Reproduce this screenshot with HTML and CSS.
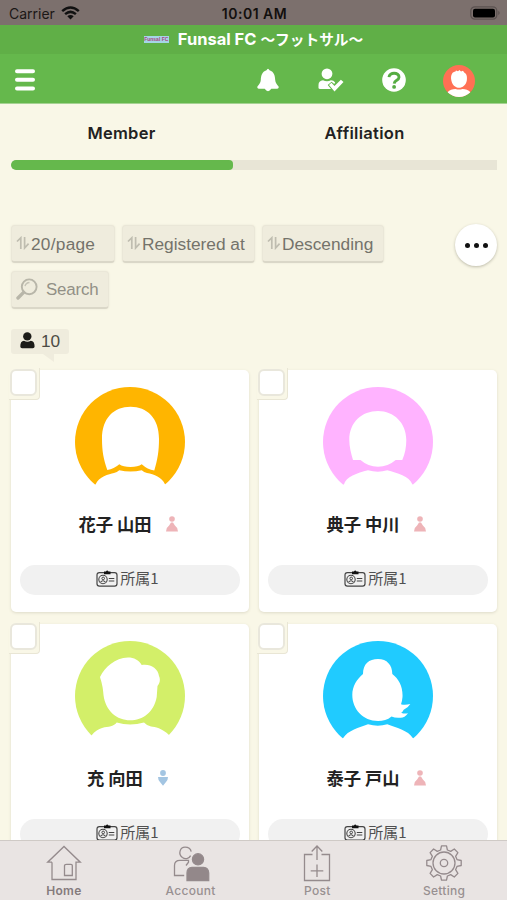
FILE: index.html
```html
<!DOCTYPE html>
<html lang="ja">
<head>
<meta charset="utf-8">
<title>Funsal FC</title>
<link rel="stylesheet" href="styles.css">
</head>
<body>
<svg class="defs" width="0" height="0" aria-hidden="true">
  <symbol id="sort" viewBox="0 0 14 14"><path d="M1 5.5 4.8 1.8V13M8.6 1V12L12.6 7.6" fill="none" stroke="currentColor" stroke-width="1.7"/></symbol>
  <symbol id="female" viewBox="0 0 12 16"><circle cx="6" cy="3" r="2.8"/><path d="M5 6.4h2L8.9 9.6Q11.8 11.6 12 15.4H0Q.2 11.6 3.1 9.6Z"/></symbol>
  <symbol id="male" viewBox="0 0 12 16"><circle cx="6" cy="3" r="2.9"/><path d="M1 7H11Q11 10 9 12L6 15.8 3 12Q1 10 1 7Z"/></symbol>
  <symbol id="card" viewBox="0 0 22 17"><rect x="1" y="2.6" width="20" height="13.6" rx="2.4" fill="none" stroke="#444" stroke-width="1.2"/><path d="M8 1.6H9.9Q11.2 -.8 12.5 1.6H14.5V4.3H8Z" fill="#111"/><circle cx="7" cy="9.5" r="4.2" fill="none" stroke="#444" stroke-width="1.1"/><circle cx="7.2" cy="8.4" r="1.3" fill="none" stroke="#444"/><path d="M4.6 12.2Q7 9.2 9.4 12.2M12.8 8.5H18.3M12.8 11H18.3" fill="none" stroke="#444" stroke-width="1.1"/></symbol>
</svg>
<div class="app">
  <header>
    <div class="status">
      <div class="carrier"><span>Carrier</span>
        <svg width="19" height="14" viewBox="0 0 19 14"><g fill="none" stroke="#111" stroke-width="2.5"><path d="M1.2 5.1Q9.5-2.1 17.8 5.1M4.1 8.1Q9.5 3.6 14.9 8.1"/></g><path d="M9.5 13.6 6.3 10.3Q9.5 7.9 12.7 10.3Z" fill="#111"/></svg>
      </div>
      <time>10:01 AM</time>
      <svg class="battery" width="31" height="14" viewBox="0 0 31 14"><rect x=".8" y=".8" width="26" height="12.4" rx="4" fill="none" stroke="#5b5250" stroke-width="1.2"/><rect x="3" y="2.8" width="22" height="8.6" rx="2" fill="#000"/><path d="M28.3 4.8Q31 7 28.3 9.2Z" fill="#5b5250"/></svg>
    </div>
    <div class="title"><span class="logo">Funsal FC</span><h1>Funsal FC <span>〜フットサル〜</span></h1></div>
    <nav>
      <svg class="burger" width="20" height="22" viewBox="0 0 20 22"><path d="M2 2.2H18M2 10.8H18M2 19.4H18" stroke="#fff" stroke-width="4" stroke-linecap="round"/></svg>
      <div class="actions">
        <svg width="22" height="24" viewBox="0 0 22 24"><path d="M9.5 2.2Q11-.9 12.5 2.2C17.2 3.6 18 8 18.2 12 18.4 15 20 16.5 21.4 18.2 22.2 19.6 21.3 20.7 20.3 20.7H14.3Q11 25.6 7.7 20.7H1.7C.7 20.7-.2 19.6.6 18.2 2 16.5 3.6 15 3.8 12 4 8 4.8 3.6 9.5 2.2Z" fill="#fff"/></svg>
        <svg width="26" height="24" viewBox="0 0 26 24"><g fill="#fff"><circle cx="9" cy="5.8" r="5.4"/><path d="M.5 20.5V17Q.5 12.7 5 12.3 9 14 13 12.3 15.5 12.3 17.2 14.6L16.2 16 13.6 13.8 9.7 17 13 21H2.3Q.5 21 .5 20Z"/><path d="m11 17 2.4-2.2 3.1 3.1 6.4-6.2 2.6 2.3-9 9.5Z"/></g></svg>
        <svg width="24" height="24" viewBox="0 0 24 24"><circle cx="12" cy="12" r="11.8" fill="#fff"/><path d="M7 9.2C7.3 3.8 17.2 4 17 9.2 16.9 12.6 12.4 11.8 12.2 15.6" fill="none" stroke="#56ac43" stroke-width="2.9"/><circle cx="12.1" cy="18.9" r="1.9" fill="#56ac43"/></svg>
        <svg width="32" height="32" viewBox="0 0 32 32"><clipPath id="ac"><circle cx="16" cy="16" r="16"/></clipPath><g clip-path="url(#ac)"><path fill="#ff7054" d="M0 0h32v32H0z"/><path fill="#fff" d="M8.1 14C7.6 9 10.3 6.5 12.2 6.8L13 5.4 15 6.3 16.5 5 18 6.4 20 5.7 21.2 7.5C24 9 24.2 12 23.8 15.5 23.2 20 19.5 22.8 16 22.8S8.8 20 8.1 14ZM4.5 27.2Q7.7 24 12.5 24 16 25 19.5 24 24.2 24 27.5 27.2L27 33H5Z"/></g></svg>
      </div>
    </nav>
  </header>
  <main>
    <div class="tabs"><span class="m">Member</span><span class="a">Affiliation</span></div>
    <div class="bar"><i></i></div>
    <div class="tools">
      <div class="filters">
        <div class="btn b1"><svg><use href="#sort"/></svg><span>20/page</span></div>
        <div class="btn b2"><svg><use href="#sort"/></svg><span>Registered at</span></div>
        <div class="btn b3"><svg><use href="#sort"/></svg><span>Descending</span></div>
        <div class="btn search"><svg class="glass" viewBox="0 0 22 22"><circle cx="13.2" cy="8.8" r="7.4" fill="none" stroke="#b8b6a9" stroke-width="1.9"/><path d="M7.6 14.4 2 20" stroke="#b8b6a9" stroke-width="3.4" stroke-linecap="round"/><path d="M9 8.2Q9.8 4.7 13.5 4.5" fill="none" stroke="#c5c3b6" stroke-width="1.4"/></svg><span>Search</span></div>
      </div>
      <div class="more"><i></i><i></i><i></i></div>
    </div>
    <div class="count"><svg width="15" height="17" viewBox="0 0 15 17"><circle cx="7.3" cy="4.4" r="4.2"/><path d="M.3 14.5Q.2 9 4 8.7 7.3 10.6 10.8 8.7 14.6 9 14.6 14.5 14.5 16.3 12.8 16.3H2Q.4 16.3.3 14.5Z"/></svg><span>10</span></div>
    <div class="cards">
      <article><span class="check"></span>
        <svg class="avatar" viewBox="0 0 110 110"><circle cx="55" cy="55" r="55" fill="#ffb500"/><path fill="#fff" d="M32.3 83C28.5 72 27 64 27 52 27 31 39 19.8 55.5 19.8S84 31 84 52C84 64 82.5 73 79.3 83.5Q72.5 82.5 66.7 77.3 63 80 55.5 80T44.3 77.3Q39 82 32.3 83ZM0 111 20.7 97.3C23.5 90 34 87 39 86Q42 85.5 44.3 83.2 55.5 86 66.7 83.2 69 85.5 72 86C79 87.5 87 90 90 97.3L111 111Z"/></svg>
        <div class="name"><b>花子 山田</b><svg class="f"><use href="#female"/></svg></div>
        <div class="pill"><svg><use href="#card"/></svg><span>所属1</span></div>
      </article>
      <article><span class="check"></span>
        <svg class="avatar" viewBox="0 0 110 110"><circle cx="55" cy="55" r="55" fill="#ffb3ff"/><path fill="#fff" d="M30 73C28 66 26.3 60 26.3 53 26.3 35 39 24 55 24S83.3 36 83.3 53C83.3 60 82 67 79.3 73H72.7Q65 79.7 55 79.7T37.5 73ZM0 111 21 97.3C23 90 34 86 45 83.3Q55 86 64.3 83.3C74 86 86.5 89 89.3 97.3L111 111Z"/></svg>
        <div class="name"><b>典子 中川</b><svg class="f"><use href="#female"/></svg></div>
        <div class="pill"><svg><use href="#card"/></svg><span>所属1</span></div>
      </article>
      <article><span class="check"></span>
        <svg class="avatar" viewBox="0 0 110 110"><circle cx="55" cy="55" r="55" fill="#d3ef69"/><path fill="#fff" d="M25 36C30 26 40 17 53 16.5 59 16.5 64 19 66.7 24 75 22.5 83 27 84 35 85.5 38 85 42 82.5 45L81.7 56C79 71 68 79.3 55 79.3S30.5 70 28.5 54C28 46 26.5 41 25 36ZM0 111 16.7 94.3C23 86 32 86 35 85.5Q40 84 41.7 81.5 55 85.5 69 81.5 71 84 76 85.5C80 86 87 87 94.3 94.3L111 111Z"/></svg>
        <div class="name"><b>充 向田</b><svg class="m"><use href="#male"/></svg></div>
        <div class="pill"><svg><use href="#card"/></svg><span>所属1</span></div>
      </article>
      <article><span class="check"></span>
        <svg class="avatar" viewBox="0 0 110 110"><circle cx="55" cy="55" r="55" fill="#20cbff"/><path fill="#fff" d="M40 33C40 23 46 18 55 18S69.3 24 69.3 33C76 38 80 46 79.5 56Q79 61 78 63.3 82 64.5 87.3 63 85 67 80.7 68.7 79.5 71 78.2 71.7 81 73 85 72.3 81 77.5 76.7 76.7 72 77 68.5 75.5C64.5 79 60 80 55 80 40 80 29.3 68 29.3 54 29.3 45 34 38 40 33ZM0 111 20 97.3C25 89 36 87 45 83.3Q55 86 64.3 83.3C73 87 85 89 90 97.3L111 111Z"/></svg>
        <div class="name"><b>泰子 戸山</b><svg class="f"><use href="#female"/></svg></div>
        <div class="pill"><svg><use href="#card"/></svg><span>所属1</span></div>
      </article>
    </div>
  </main>
  <footer>
    <div class="on"><svg viewBox="0 0 38 38"><path d="M7 18.2H2.7L19 2.5 35.3 18.2H31V35.5H7V18.2M21.5 20.3H26Q27.3 20.3 27.3 21.6V31.5H19.5V21.6Q19.5 20.3 21.5 20.3Z"/></svg><span>Home</span></div>
    <div><svg viewBox="0 0 38 38"><path d="M12.2 31.5H2.5V21.5Q2.5 16.3 8 16.3H16.5V18.2L14 21.5M18.6 11.6C17 15 13 15.5 10.4 13.6 5.5 9.5 8.4 3.2 13 3.2Q18.3 3.2 19.2 7.6"/><circle cx="26" cy="15.3" r="5.6" fill="#93888a"/><path fill="#93888a" d="M15 36.7V29Q15 23.7 20 23.3H31.5Q36.5 23.7 36.7 29V36.7Z"/></svg><span>Account</span></div>
    <div><svg viewBox="0 0 38 38"><path d="M14.5 10.5H6.5V36.5H31.5V10.5H23.5M19 16V2.3M13.7 7.5 19 2 24.3 7.5M19 20.5V33M12.7 26.8H25.3"/></svg><span>Post</span></div>
    <div><svg viewBox="0 0 38 38"><path d="M16.5 1.8H21.5L22.4 6 25.7 7.4 29.3 5 32.9 8.6 30.6 12.3 32 15.6 36.2 16.5V21.5L32 22.4 30.6 25.7 32.9 29.4 29.3 33 25.7 30.6 22.4 32 21.5 36.2H16.5L15.6 32 12.3 30.6 8.6 33 5.1 29.4 7.4 25.7 6 22.4 1.8 21.5V16.5L6 15.6 7.4 12.3 5.1 8.6 8.6 5 12.3 7.4 15.6 6Z" stroke-linejoin="round"/><circle cx="19" cy="19" r="11"/><circle cx="19" cy="19" r="3.7"/></svg><span>Setting</span></div>
  </footer>
</div>
</body>
</html>
```
FILE: styles.css
```css
* { box-sizing: border-box; }
body { margin: 0; background: #f9f7e7; font-family: "Liberation Sans", "Noto Sans CJK JP", sans-serif; color: #222; }
svg { display: block; flex: none; }
.defs { position: absolute; }
.app { width: 507px; height: 900px; display: flex; flex-direction: column; overflow: hidden; }
header { flex: none; height: 104px; display: flex; flex-direction: column; border-bottom: 1px solid #a5d292; background: #65b84c; }
.status { height: 25px; background: #7c706d; display: grid; grid-template-columns: 1fr auto 1fr; align-items: center; padding: 2px 6px 0 9px; font: 14px/20px Inter, sans-serif; color: #1b1716; }
.carrier { display: flex; align-items: center; gap: 6px; }
.carrier svg { margin-top: -2px; }
.status time { font-weight: 600; font-size: 14px; letter-spacing: .5px; color: #120f0e; margin-right: 1px; }
.battery { justify-self: end; margin-top: -1px; }
.title { height: 29px; background: #60af47; display: flex; align-items: center; justify-content: center; gap: 9px; }
.logo { width: 25px; height: 7px; background: #a5d5e7; color: #aa477d; font: bold 5px/7px "Liberation Sans", sans-serif; text-align: center; white-space: nowrap; }
h1 { margin: -1px 0 0; color: #fff; font: 700 16.5px/28px Inter, "Noto Sans CJK JP", sans-serif; white-space: nowrap; }
h1 span { font-family: "Noto Sans CJK JP", sans-serif; font-size: 14.7px; line-height: 20px; }
nav { flex: 1; display: flex; justify-content: space-between; padding: 15px 32px 0 15px; }
.actions { display: flex; align-items: flex-start; height: 34px; }
.actions svg:nth-child(1) { margin: -1px 0 0 0; }
.actions svg:nth-child(2) { margin: -1px 0 0 39px; }
.actions svg:nth-child(3) { margin: -1px 0 0 38px; }
.actions svg:nth-child(4) { margin: -4px 0 0 37px; }
main { flex: 1; min-height: 0; overflow: hidden; padding: 0 10px 0 11px; }
.tabs { height: 56px; display: grid; grid-template-columns: 243px 243px; margin-left: -11px; padding-top: 18px; text-align: center; font: 600 16.5px/22px Inter, sans-serif; letter-spacing: .3px; }
.bar { height: 10px; border-radius: 5px 0 0 5px; background: #e8e5d6; overflow: hidden; }
.bar i { display: block; width: 222px; height: 10px; border-radius: 4px; background: #65b84c; }
.tools { margin-top: 55px; display: flex; justify-content: space-between; align-items: flex-start; }
.filters { width: 400px; display: flex; flex-wrap: wrap; gap: 8px 7px; }
.btn { height: 38px; border-radius: 4px; background: #efecdd; border: 1px solid #eae7d8; border-bottom: 2px solid #dad7c8; box-shadow: 0 0 2px #e7e4d5; display: flex; align-items: center; padding-left: 4px; font-size: 17.3px; line-height: 24px; color: #74736b; white-space: nowrap; }
.btn svg { width: 14px; height: 14px; color: #bfbdb0; margin-right: 1px; margin-top: -1px; }
.b1 { width: 104px; letter-spacing: .25px; } .b2 { width: 133px; } .b3 { width: 122px; }
.search { width: 98px; color: #929086; font-size: 16.9px; }
.search span { letter-spacing: -.15px; }
.btn .glass { width: 22px; height: 22px; margin: -2px 8px 0 0; }
.more { width: 42px; height: 42px; margin-top: -1px; border-radius: 50%; background: #fff; box-shadow: 0 1px 3px #bdbbaa; display: flex; align-items: center; justify-content: center; gap: 4px; }
.more i { width: 5px; height: 5px; border-radius: 50%; background: #111; }
.count { position: relative; width: 58px; height: 25px; margin-top: 20px; background: #efecdd; border-radius: 3px; display: flex; align-items: center; gap: 6px; padding-left: 9px; font-size: 17.3px; color: #4c4b45; }
.count svg { fill: #1c1c18; margin-top: -2px; }
.count::after { content: ""; position: absolute; left: 32px; top: 25px; border-top: 8px solid #efecdd; border-left: 11px solid transparent; }
.cards { margin-top: 16px; display: grid; grid-template-columns: 238px 238px; gap: 12px 10px; }
article { position: relative; height: 242px; background: #fff; border-radius: 5px; box-shadow: 0 1px 3px #dedbc9; display: flex; flex-direction: column; align-items: center; padding-top: 17px; }
.check { position: absolute; left: -2px; top: -2px; width: 31px; height: 32px; background: #f9f7e7; border-right: 1px solid #e9e6d5; border-bottom: 1px solid #e9e6d5; border-radius: 0 0 4px 0; }
.check::before { content: ""; box-sizing: border-box; position: absolute; left: 1px; top: 1px; width: 27px; height: 27px; border: 2px solid #e9e7dc; border-radius: 6px; background: #fff; }
.avatar { width: 110px; height: 110px; }
.name { height: 26px; margin: 14px 4px 0 0; display: flex; align-items: center; gap: 14px; }
.name b { font: 700 17.3px/26px "Noto Sans CJK JP", sans-serif; white-space: nowrap; }
.name svg { width: 12px; height: 16px; }
.f { fill: #eeb4b8; } .name .m { fill: #a3c5e2; }
.pill { width: 220px; height: 30px; margin-top: 28px; border-radius: 15px; background: #f1f1f1; display: flex; align-items: center; justify-content: center; gap: 2px; padding: 0 4px 4px 0; font: 400 15px/24px "Noto Sans CJK JP", sans-serif; color: #505050; margin-right: 1px; }
.pill svg { width: 22px; height: 17px; }
footer { flex: none; height: 60px; border-top: 1px solid #cfcac6; background: #e9e4e3; display: grid; grid-template-columns: repeat(4, 1fr); font: 500 12px/16px Inter, sans-serif; letter-spacing: .3px; color: #989091; }
footer div { display: flex; flex-direction: column; align-items: center; padding: 3px 0 0 1px; }
footer svg { width: 38px; height: 38px; fill: none; stroke: #958b8d; stroke-width: 1.3; }
footer span { margin-top: 1px; }
footer .on { font-weight: 600; color: #857b7d; }
```
